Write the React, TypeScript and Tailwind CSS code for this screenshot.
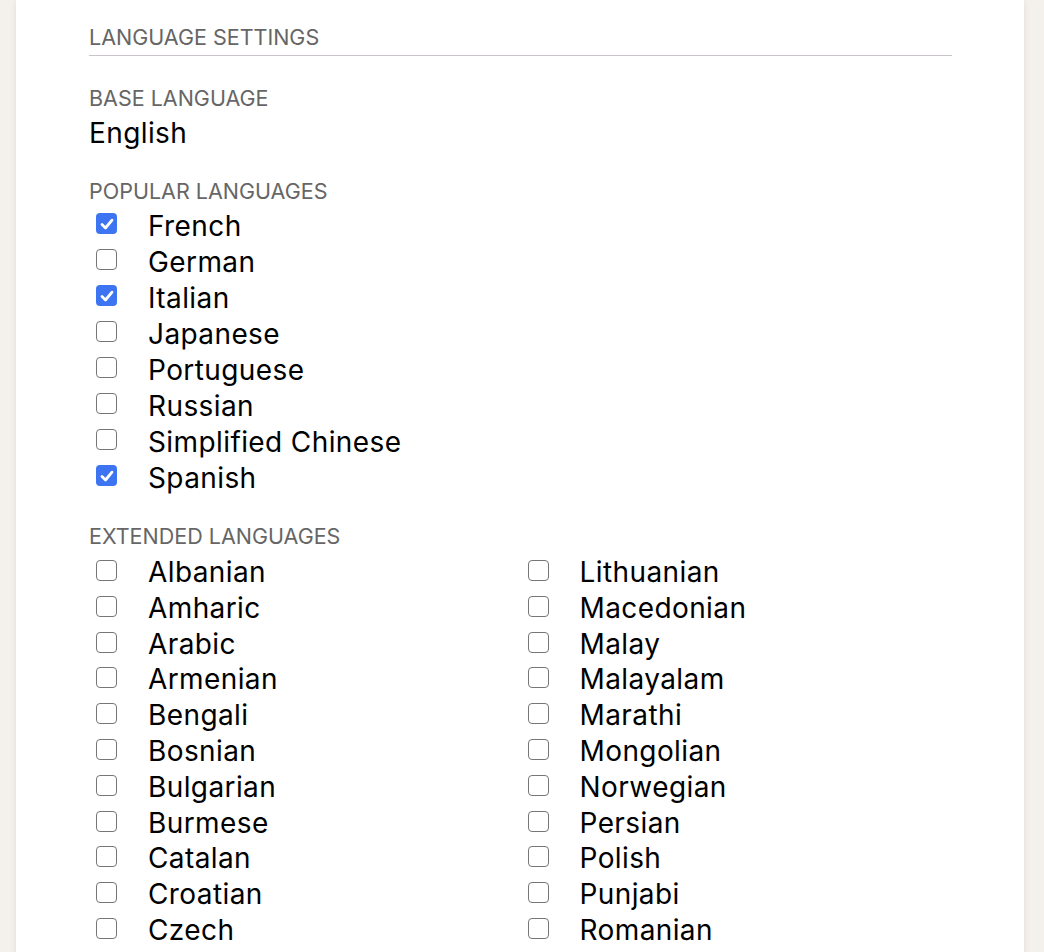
const popular = [
  { name: "French", checked: true },
  { name: "German", checked: false },
  { name: "Italian", checked: true },
  { name: "Japanese", checked: false },
  { name: "Portuguese", checked: false },
  { name: "Russian", checked: false },
  { name: "Simplified Chinese", checked: false },
  { name: "Spanish", checked: true },
];

const extendedLeft = [
  "Albanian",
  "Amharic",
  "Arabic",
  "Armenian",
  "Bengali",
  "Bosnian",
  "Bulgarian",
  "Burmese",
  "Catalan",
  "Croatian",
  "Czech",
];

const extendedRight = [
  "Lithuanian",
  "Macedonian",
  "Malay",
  "Malayalam",
  "Marathi",
  "Mongolian",
  "Norwegian",
  "Persian",
  "Polish",
  "Punjabi",
  "Romanian",
];

const Checkbox = ({ checked }: { checked: boolean }) =>
  checked ? (
    <span className="mt-[5px] ml-[7px] flex h-[21px] w-[21px] shrink-0 items-center justify-center rounded-[4px] bg-[#3d74f2]">
      <svg viewBox="0 0 16 16" className="h-[16px] w-[16px]" fill="none">
        <path
          d="M3 8.5 6.5 12 13 4.2"
          stroke="white"
          strokeWidth="2.8"
          strokeLinecap="round"
          strokeLinejoin="round"
        />
      </svg>
    </span>
  ) : (
    <span className="mt-[5px] ml-[7px] h-[21px] w-[21px] shrink-0 rounded-[4px] border-[1.5px] border-[#767676] bg-white" />
  );

const Row = ({ name, checked, tight }: { name: string; checked: boolean; tight?: boolean }) => (
  <label
    className={`flex items-start text-[28px] tracking-[0.4px] text-black ${
      tight ? "leading-[35.8px]" : "leading-[36px]"
    }`}
  >
    <Checkbox checked={checked} />
    <span className="ml-[31px]">{name}</span>
  </label>
);

const Label = ({ children }: { children: string }) => (
  <div className="text-[21.5px] leading-[28px] uppercase text-[#666666]">{children}</div>
);

export default function App() {
  return (
    <div
      className="h-screen overflow-hidden bg-[#f4f0eb] pl-4 pr-5"
      style={{ fontFamily: "Inter, 'Noto Sans', sans-serif" }}
    >
      <div className="min-h-screen bg-white pl-[73px] pr-[72px] pt-[23px] pb-10 shadow-[0_0_6px_rgba(120,100,80,0.12)]">
        {/* Section header */}
        <div className="border-b border-[#cbc3cc] pb-[4px]">
          <Label>Language Settings</Label>
        </div>

        {/* Base language */}
        <div className="mt-[28px]">
          <Label>Base Language</Label>
          <div className="mt-[3px] text-[28px] leading-[36px] tracking-[0.4px] text-black">
            English
          </div>
        </div>

        {/* Popular */}
        <div className="mt-[26px]">
          <Label>Popular Languages</Label>
          <div className="mt-[3px] flex flex-col">
            {popular.map((l) => (
              <Row key={l.name} name={l.name} checked={l.checked} />
            ))}
          </div>
        </div>

        {/* Extended */}
        <div className="mt-[26px]">
          <Label>Extended Languages</Label>
          <div className="mt-[5px] grid grid-cols-2">
            <div className="flex flex-col">
              {extendedLeft.map((n) => (
                <Row key={n} name={n} checked={false} tight />
              ))}
            </div>
            <div className="flex flex-col">
              {extendedRight.map((n) => (
                <Row key={n} name={n} checked={false} tight />
              ))}
            </div>
          </div>
        </div>
      </div>
    </div>
  );
}
